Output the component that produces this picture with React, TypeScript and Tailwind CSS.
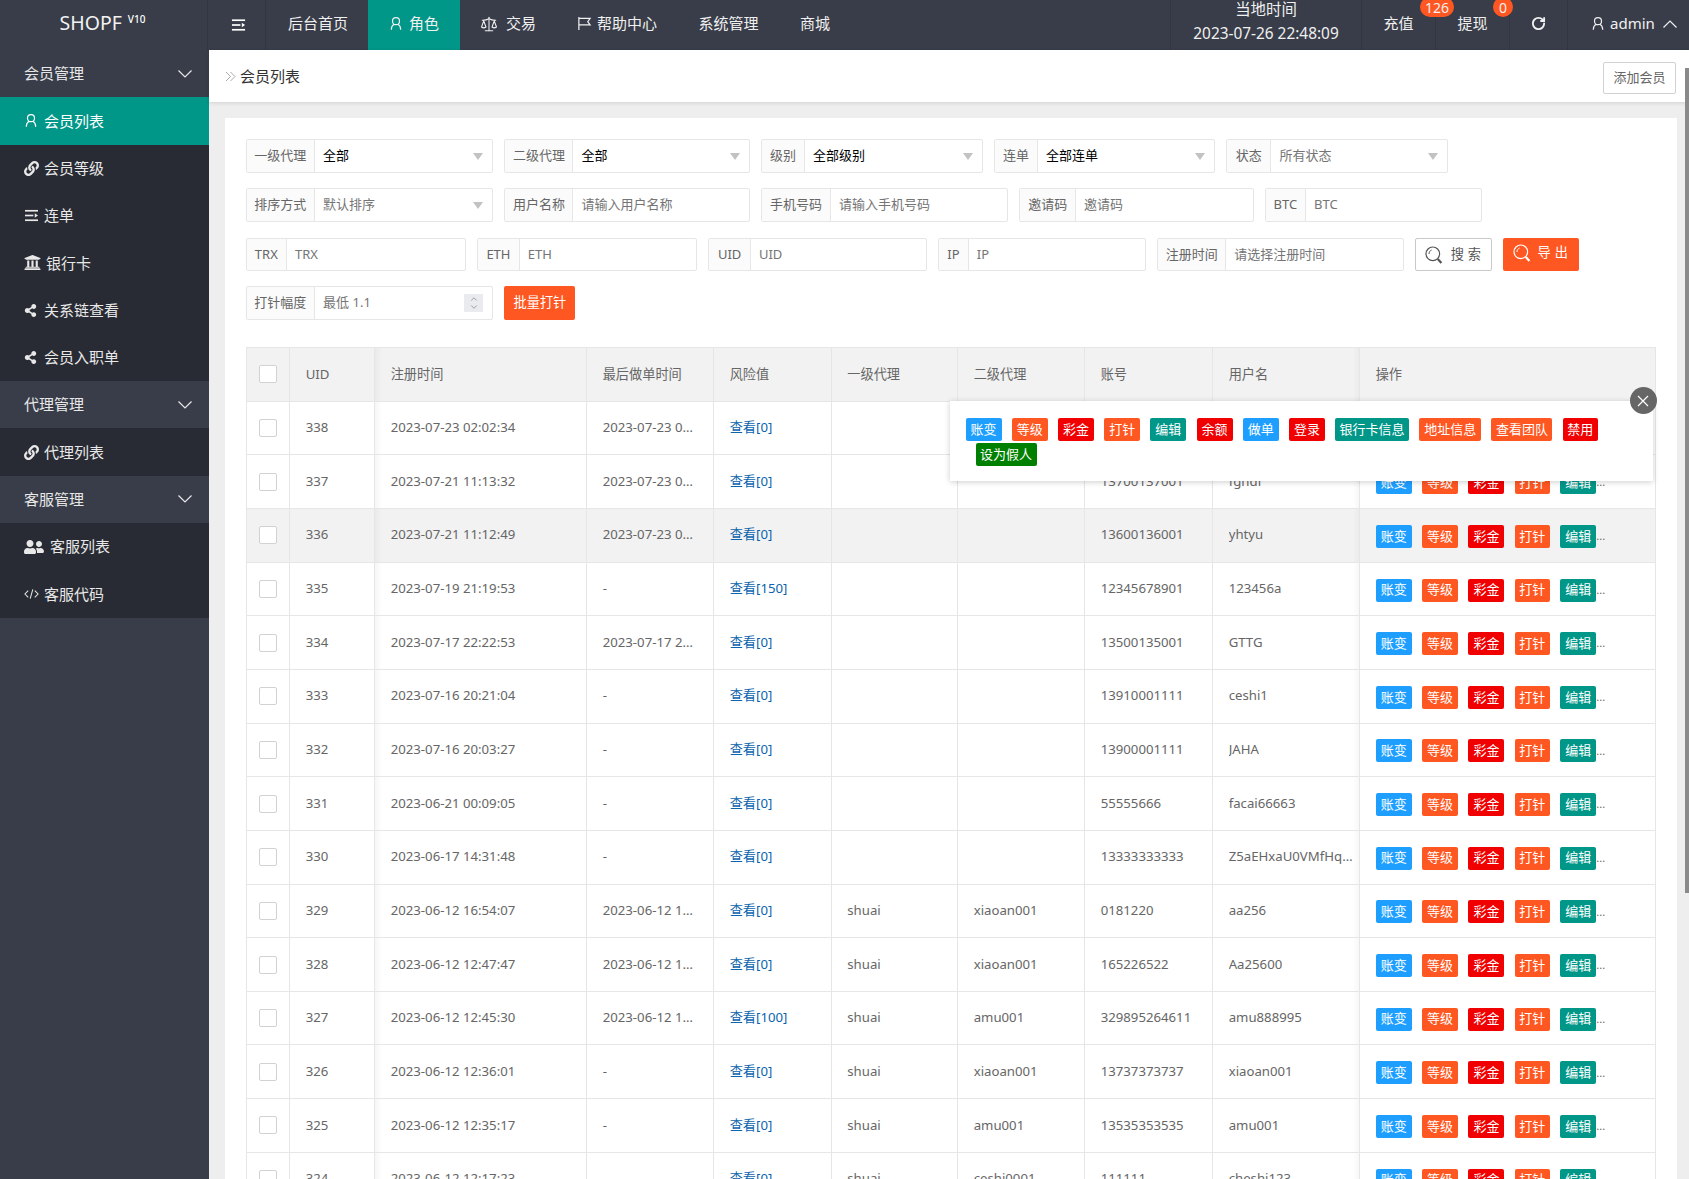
import React from "react";
import { FaLink, FaUniversity, FaShareAlt, FaUserFriends } from "react-icons/fa";
import { RotateCw, Scale, ChevronUp, ChevronDown } from "lucide-react";

const UserIcon = ({ c = "" }: { c?: string }) => (
  <svg viewBox="0 0 16 16" className={c} fill="none" stroke="currentColor" strokeWidth="1.4">
    <circle cx="8" cy="5.4" r="4" />
    <path d="M2.6 15.2c.1-3.2 1.5-5.4 3.2-6.3M13.4 15.2c-.1-3.2-1.5-5.4-3.2-6.3" />
  </svg>
);
const ShrinkIcon = ({ c = "" }: { c?: string }) => (
  <svg viewBox="0 0 16 14" className={c} fill="currentColor">
    <rect x="1" y="1" width="14" height="1.8" />
    <rect x="1" y="6.1" width="9" height="1.8" />
    <rect x="1" y="11.2" width="14" height="1.8" />
    <path d="M11.5 4.6 15 7l-3.5 2.4z" />
  </svg>
);
const FlagIcon = ({ c = "" }: { c?: string }) => (
  <svg viewBox="0 0 16 16" className={c} fill="none" stroke="currentColor" strokeWidth="1.3">
    <path d="M2 1v14M2 2.5h12l-2.5 3.5 2.5 3.5H2" />
  </svg>
);
const CodeIcon = ({ c = "" }: { c?: string }) => (
  <svg viewBox="0 0 16 12" className={c} fill="none" stroke="currentColor" strokeWidth="1.1">
    <path d="M4.5 2.5 1 6l3.5 3.5M11.5 2.5 15 6l-3.5 3.5M9.4 1 6.6 11" />
  </svg>
);
const Chev = ({ up = false }: { up?: boolean }) => (
  <svg viewBox="0 0 14 8" className="h-[8px] w-[14px]" fill="none" stroke="currentColor" strokeWidth="1.2">
    <path d={up ? "M.5 7.5 7 1l6.5 6.5" : "M.5.5 7 7 13.5.5"} />
  </svg>
);
const SearchIcon = ({ c = "" }: { c?: string }) => (
  <svg viewBox="0 0 18 18" className={c} fill="none" stroke="currentColor">
    <circle cx="7.8" cy="7.8" r="6.8" strokeWidth="1.2" />
    <path d="M4 8c0-2 1-3.4 2.6-4" strokeWidth="1" />
    <path d="M12.8 13l3.6 4" strokeWidth="2.2" />
  </svg>
);

function Side({ icon, children, active = false, gap = "ml-[44px]" }: { icon: React.ReactNode; children: React.ReactNode; active?: boolean; gap?: string }) {
  return (
    <div className={`relative flex h-[47.3px] items-center text-[15px] text-[#e8e8e8] ${active ? "bg-[#009688] text-white" : "bg-[#282b33]"}`}>
      <span className="absolute left-[24px] flex w-[20px] items-center">{icon}</span>
      <span className={gap}>{children}</span>
    </div>
  );
}
function Group({ children }: { children: React.ReactNode }) {
  return (
    <div className="flex h-[47.3px] items-center justify-between pl-[24px] pr-[17px] text-[15px] text-[#e8e8e8] bg-[#393d49]">
      <span>{children}</span>
      <Chev />
    </div>
  );
}
function Nav({ children, c = "" }: { children: React.ReactNode; c?: string }) {
  return <div className={`flex h-full items-center justify-center pb-[3px] text-[15px] text-[#f0f0f0] ${c}`}>{children}</div>;
}
function Field({ w, lw, label, value, dark = false, select = false, num = false }: { w: string; lw: string; label: string; value: string; dark?: boolean; select?: boolean; num?: boolean }) {
  return (
    <div className={`flex h-full items-stretch rounded-[2px] border border-[#e6e6e6] bg-white text-[13px] ${w}`}>
      <div className={`flex shrink-0 items-center justify-center whitespace-nowrap border-r border-[#e6e6e6] bg-[#fbfbfb] text-[#666] ${lw}`}>{label}</div>
      <div className={`flex flex-1 items-center justify-between pl-[8px] pr-[9px] ${dark ? "text-black" : "text-[#757575]"}`}>
        <span>{value}</span>
        {select && <span className="h-0 w-0 border-x-[5.5px] border-t-[7px] border-x-transparent border-t-[#c2c2c2]" />}
        {num && (
          <span className="flex h-[18px] w-[19px] flex-col items-center justify-center bg-[#e9ebee] text-[#777]">
            <ChevronUp size={10} strokeWidth={1.6} className="mb-[-1px]" />
            <ChevronDown size={10} strokeWidth={1.6} className="mt-[-1px]" />
          </span>
        )}
      </div>
    </div>
  );
}
function Btn({ color, children, c = "" }: { color: string; children: React.ReactNode; c?: string }) {
  return <span className={`inline-flex h-[23px] shrink-0 items-center justify-center whitespace-nowrap rounded-[2px] px-[5px] text-[13px] text-white ${color} ${c}`}>{children}</span>;
}
const BLUE = "bg-[#1e9fff]";
const ORANGE = "bg-[#ff5722]";
const RED = "bg-[#f00000]";
const TEAL = "bg-[#009688]";

type Row = [string, string, string, string, string, string, string, string];
const rows: Row[] = [
  ["338", "2023-07-23 02:02:34", "2023-07-23 02:02:34", "查看[0]", "", "", "", ""],
  ["337", "2023-07-21 11:13:32", "2023-07-23 02:02:34", "查看[0]", "", "", "13700137001", "fghdf"],
  ["336", "2023-07-21 11:12:49", "2023-07-23 02:02:34", "查看[0]", "", "", "13600136001", "yhtyu"],
  ["335", "2023-07-19 21:19:53", "-", "查看[150]", "", "", "12345678901", "123456a"],
  ["334", "2023-07-17 22:22:53", "2023-07-17 22:22:53", "查看[0]", "", "", "13500135001", "GTTG"],
  ["333", "2023-07-16 20:21:04", "-", "查看[0]", "", "", "13910001111", "ceshi1"],
  ["332", "2023-07-16 20:03:27", "-", "查看[0]", "", "", "13900001111", "JAHA"],
  ["331", "2023-06-21 00:09:05", "-", "查看[0]", "", "", "55555666", "facai66663"],
  ["330", "2023-06-17 14:31:48", "-", "查看[0]", "", "", "13333333333", "Z5aEHxaU0VMfHqTuvw"],
  ["329", "2023-06-12 16:54:07", "2023-06-12 16:54:07", "查看[0]", "shuai", "xiaoan001", "0181220", "aa256"],
  ["328", "2023-06-12 12:47:47", "2023-06-12 12:47:47", "查看[0]", "shuai", "xiaoan001", "165226522", "Aa25600"],
  ["327", "2023-06-12 12:45:30", "2023-06-12 12:45:30", "查看[100]", "shuai", "amu001", "329895264611", "amu888995"],
  ["326", "2023-06-12 12:36:01", "-", "查看[0]", "shuai", "xiaoan001", "13737373737", "xiaoan001"],
  ["325", "2023-06-12 12:35:17", "-", "查看[0]", "shuai", "amu001", "13535353535", "amu001"],
  ["324", "2023-06-12 12:17:23", "-", "查看[0]", "shuai", "ceshi0001", "111111", "cheshi123"],
];
const GRID = "grid grid-cols-[43.5px_85px_212px_127px_117.6px_126.4px_127px_128px_147px_295.6px]";
const CELL = "flex min-w-0 items-center border-r border-b border-[#e6e6e6] px-[15.6px]";
const Check = () => <span className="h-[18px] w-[18px] rounded-[2px] border border-[#d2d2d2] bg-white" />;
const LSHADOW = "bg-[linear-gradient(90deg,rgba(0,0,0,0.035),rgba(0,0,0,0)_7px)]";
const RSHADOW = "bg-[linear-gradient(270deg,rgba(0,0,0,0.03),rgba(0,0,0,0)_6px)]";

export default function App() {
  return (
    <div className="flex h-[1179px] w-full flex-col overflow-hidden bg-[#eeeeee] font-['Noto_Sans','Noto_Sans_CJK_SC',sans-serif] text-[13.2px] text-[#666]">
      <header className="flex h-[50px] shrink-0 items-stretch bg-[#393d49] text-white">
        <div className="flex w-[208px] items-center justify-center border-r border-[#33363f] pb-[4px] pr-[2px]">
          <span className="text-[19.5px] text-[#f2f2f2]">SHOPF</span>
          <span className="mb-[8px] ml-[6px] text-[10px] font-medium">V10</span>
        </div>
        <div className="flex w-[58px] items-center justify-center border-r border-[#33363f] pb-[1px] pl-[3px]">
          <ShrinkIcon c="h-[14px] w-[15px]" />
        </div>
        <Nav c="w-[102px] pl-[2px]">后台首页</Nav>
        <Nav c="w-[92px] gap-[6px] bg-[#009688]">
          <UserIcon c="h-[15px] w-[14px]" />
          <span>角色</span>
        </Nav>
        <Nav c="w-[96px] gap-[8px]">
          <Scale size={18} strokeWidth={1.4} />
          <span>交易</span>
        </Nav>
        <Nav c="w-[122px] gap-[5px]">
          <FlagIcon c="h-[15px] w-[15px]" />
          <span>帮助中心</span>
        </Nav>
        <Nav c="w-[101px]">系统管理</Nav>
        <Nav c="w-[72px]">商城</Nav>
        <div className="flex-1" />
        <div className="flex w-[192px] flex-col items-center border-x border-[#33363f] text-[15.4px] leading-[24px] text-[#f0f0f0]">
          <span className="mt-[-2px]">当地时间</span>
          <span>2023-07-26 22:48:09</span>
        </div>
        <Nav c="relative w-[74px] border-r border-[#33363f]">
          充值
          <span className="absolute left-[58px] top-[-3px] flex h-[20px] w-[34px] items-center justify-center rounded-full bg-[#ff5722] text-[14px]">126</span>
        </Nav>
        <Nav c="relative w-[74px] border-r border-[#33363f]">
          提现
          <span className="absolute left-[57px] top-[-3px] flex h-[20px] w-[20px] items-center justify-center rounded-full bg-[#ff5722] text-[14px]">0</span>
        </Nav>
        <Nav c="w-[58px] border-r border-[#33363f]">
          <RotateCw size={15} strokeWidth={3} />
        </Nav>
        <div className="flex w-[121px] items-center gap-[5px] pb-[3px] pl-[23px] text-[15px] text-[#f0f0f0]">
          <UserIcon c="h-[15px] w-[14px]" />
          <span>admin</span>
          <span className="ml-[3px]">
            <Chev up />
          </span>
        </div>
      </header>

      <div className="flex min-h-0 flex-1">
        <aside className="w-[209px] shrink-0 bg-[#393d49]">
          <Group>会员管理</Group>
          <Side active icon={<UserIcon c="h-[15px] w-[14px]" />}>会员列表</Side>
          <Side icon={<FaLink size={15} />}>会员等级</Side>
          <Side icon={<ShrinkIcon c="h-[13px] w-[15px]" />}>连单</Side>
          <Side gap="ml-[46px]" icon={<FaUniversity size={17} />}>银行卡</Side>
          <Side icon={<FaShareAlt size={13} />}>关系链查看</Side>
          <Side icon={<FaShareAlt size={13} />}>会员入职单</Side>
          <Group>代理管理</Group>
          <Side icon={<FaLink size={15} />}>代理列表</Side>
          <Group>客服管理</Group>
          <Side gap="ml-[50px]" icon={<FaUserFriends size={20} />}>客服列表</Side>
          <Side icon={<CodeIcon c="h-[12px] w-[15px]" />}>客服代码</Side>
        </aside>

        <main className="relative min-w-0 flex-1">
          <div className="flex h-[52px] items-center justify-between bg-white pl-[16px] pr-[13px] shadow-[0_1px_4px_rgba(0,0,0,0.12)]">
            <div className="mt-[1px] flex items-center gap-[4px] text-[15px] text-[#333]">
              <svg viewBox="0 0 11 11" className="h-[11px] w-[11px] text-[#aaa]" fill="none" stroke="currentColor" strokeWidth="1">
                <path d="M1 1l4.5 4.5L1 10M5.5 1 10 5.5 5.5 10" />
              </svg>
              <span>会员列表</span>
            </div>
            <div className="mt-[4px] flex h-[32px] w-[73px] items-center justify-center rounded-[2px] border border-[#d2d2d2] text-[13px] text-[#666]">添加会员</div>
          </div>
          {/* scrollbar thumb */}
          <div className="absolute right-0 top-[18px] h-[825px] w-[4px] bg-[#8a8a8a]" />

          <div className="ml-[16px] mr-[12px] mt-[16px] bg-white pl-[20.6px] pr-[21px] pt-[21px]">
            <div className="mb-[15px] flex h-[34px] gap-[11px]">
              <Field w="w-[247.8px]" lw="w-[68.5px]" label="一级代理" value="全部" dark select />
              <Field w="w-[245.5px]" lw="w-[68px]" label="二级代理" value="全部" dark select />
              <Field w="w-[222px]" lw="w-[43px]" label="级别" value="全部级别" dark select />
              <Field w="w-[221px]" lw="w-[43px]" label="连单" value="全部连单" dark select />
              <Field w="w-[222.5px]" lw="w-[44.5px]" label="状态" value="所有状态" select />
            </div>
            <div className="mb-[16px] flex h-[34px] gap-[11px]">
              <Field w="w-[247.8px]" lw="w-[68.5px]" label="排序方式" value="默认排序" select />
              <Field w="w-[245.5px]" lw="w-[68px]" label="用户名称" value="请输入用户名称" />
              <Field w="w-[247.5px]" lw="w-[69px]" label="手机号码" value="请输入手机号码" />
              <Field w="w-[234.2px]" lw="w-[55.5px]" label="邀请码" value="邀请码" />
              <Field w="w-[217.5px]" lw="w-[40.5px]" label="BTC" value="BTC" />
            </div>
            <div className="mb-[15px] flex h-[33px] gap-[11.2px]">
              <Field w="w-[220.4px]" lw="w-[40.4px]" label="TRX" value="TRX" />
              <Field w="w-[220px]" lw="w-[41.5px]" label="ETH" value="ETH" />
              <Field w="w-[218.6px]" lw="w-[41.6px]" label="UID" value="UID" />
              <Field w="w-[208px]" lw="w-[29.7px]" label="IP" value="IP" />
              <Field w="w-[246.6px]" lw="w-[68px]" label="注册时间" value="请选择注册时间" />
              <div className="flex h-full w-[76.5px] items-center justify-center gap-[8px] rounded-[2px] border border-[#c9c9c9] pl-[3px] text-[#555]">
                <SearchIcon c="h-[18px] w-[18px]" />
                <span className="tracking-[4px]">搜索</span>
              </div>
              <div className="flex h-full w-[76px] items-center justify-center gap-[7px] rounded-[2px] bg-[#ff5722] pb-[3px] pl-[3px] text-white">
                <SearchIcon c="h-[18px] w-[18px]" />
                <span className="tracking-[4px]">导出</span>
              </div>
            </div>
            <div className="mb-[26.6px] flex h-[34px] gap-[11px]">
              <Field w="w-[247.8px]" lw="w-[68.5px]" label="打针幅度" value="最低 1.1" num />
              <div className="flex h-full w-[71px] items-center justify-center rounded-[2px] bg-[#ff5722] pb-[1px] text-white">批量打针</div>
            </div>

            <div className="relative border-l border-t border-[#e6e6e6]">
              <div className={`${GRID} h-[54.2px] bg-[#f2f2f2]`}>
                <div className={`${CELL} justify-center !px-0`}><Check /></div>
                <div className={`${CELL} pt-[2px]`}>UID</div>
                <div className={`${CELL} ${LSHADOW} pt-[2px]`}>注册时间</div>
                <div className={`${CELL} pt-[2px]`}>最后做单时间</div>
                <div className={`${CELL} pt-[2px]`}>风险值</div>
                <div className={`${CELL} pt-[2px]`}>一级代理</div>
                <div className={`${CELL} pt-[2px]`}>二级代理</div>
                <div className={`${CELL} pt-[2px]`}>账号</div>
                <div className={`${CELL} ${RSHADOW} pt-[2px]`}>用户名</div>
                <div className={`${CELL} pt-[2px]`}>操作</div>
              </div>
              {rows.map((r, i) => (
                <div key={r[0]} className={`${GRID} h-[53.65px] ${i === 2 ? "bg-[#f2f2f2]" : "bg-white"}`}>
                  <div className={`${CELL} justify-center !px-0`}><Check /></div>
                  <div className={CELL}>{r[0]}</div>
                  <div className={`${CELL} ${LSHADOW}`}>{r[1]}</div>
                  <div className={`${CELL} !pr-[13px]`}><span className="truncate">{r[2]}</span></div>
                  <div className={`${CELL} text-[#0b64ad]`}>{r[3]}</div>
                  <div className={CELL}>{r[4]}</div>
                  <div className={CELL}>{r[5]}</div>
                  <div className={CELL}>{r[6]}</div>
                  <div className={`${CELL} ${RSHADOW} !pr-[5px]`}><span className="truncate">{r[7]}</span></div>
                  <div className={`${CELL} gap-[10.4px] pt-[2px]`}>
                    <Btn color={BLUE} c="w-[36px]">账变</Btn>
                    <Btn color={ORANGE} c="w-[36px]">等级</Btn>
                    <Btn color={RED} c="w-[36px]">彩金</Btn>
                    <Btn color={ORANGE} c="w-[35px]">打针</Btn>
                    <span className="flex items-center">
                      <Btn color={TEAL} c="w-[36px]">编辑</Btn>
                      <span className="text-[11px]">...</span>
                    </span>
                  </div>
                </div>
              ))}

              {/* expanded actions popup */}
              <div className="absolute left-[703px] top-[53.8px] h-[80px] w-[703.6px] bg-white pl-[16px] pr-[10px] pt-[17px] shadow-[0_1px_6px_rgba(0,0,0,0.2)]">
                <div className="flex flex-wrap gap-x-[10.2px] gap-y-[2px]">
                  <Btn color={BLUE} c="w-[36px]">账变</Btn>
                  <Btn color={ORANGE} c="w-[36px]">等级</Btn>
                  <Btn color={RED} c="w-[36px]">彩金</Btn>
                  <Btn color={ORANGE} c="w-[36px]">打针</Btn>
                  <Btn color={TEAL} c="w-[36px]">编辑</Btn>
                  <Btn color={RED} c="w-[36px]">余额</Btn>
                  <Btn color={BLUE} c="w-[36px]">做单</Btn>
                  <Btn color={RED} c="w-[36px]">登录</Btn>
                  <Btn color={TEAL} c="w-[74px]">银行卡信息</Btn>
                  <Btn color={ORANGE} c="w-[62px]">地址信息</Btn>
                  <Btn color={ORANGE} c="w-[61px]">查看团队</Btn>
                  <Btn color={RED} c="w-[35px]">禁用</Btn>
                  <Btn color="bg-[#008000]" c="ml-[10px] w-[61px]">设为假人</Btn>
                </div>
              </div>
              <div className="absolute left-[1383px] top-[39.6px] flex h-[27px] w-[27px] items-center justify-center rounded-full bg-[#666]">
                <svg viewBox="0 0 12 12" className="h-[12px] w-[12px]" fill="none" stroke="white" strokeWidth="1.2">
                  <path d="M1 1l10 10M11 1 1 11" />
                </svg>
              </div>
            </div>
          </div>
        </main>
      </div>
    </div>
  );
}
